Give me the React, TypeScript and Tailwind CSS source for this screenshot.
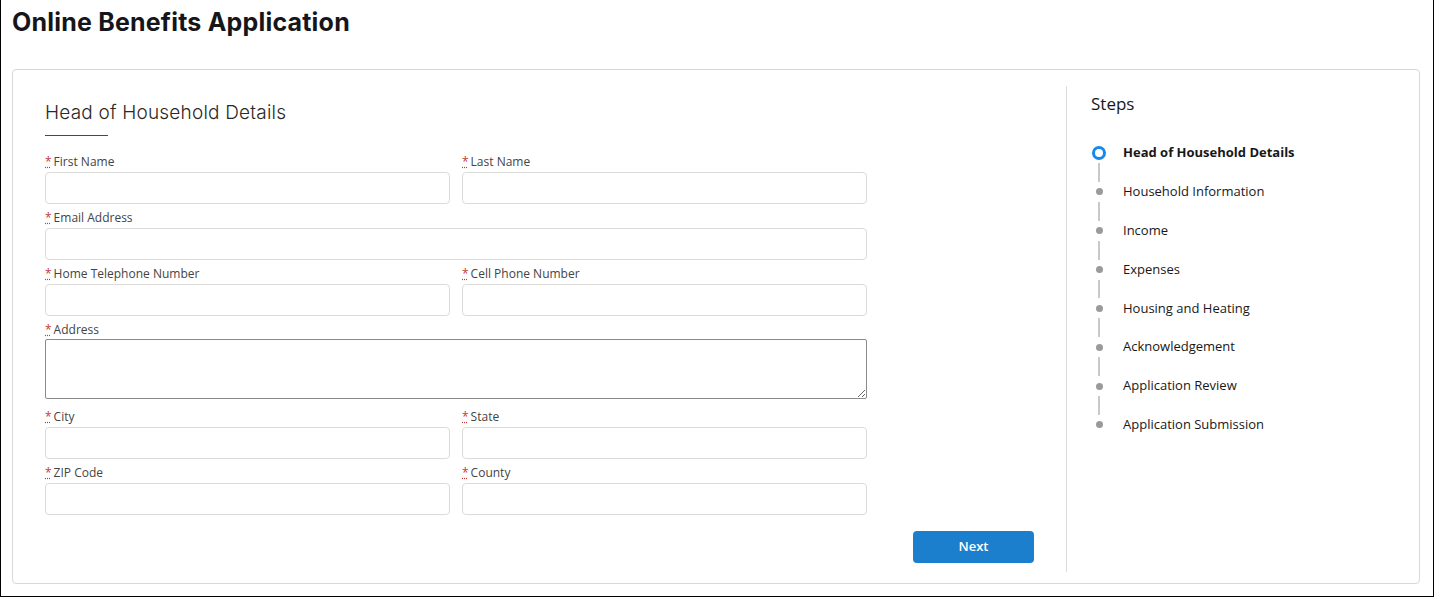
import React from 'react';

const steps = [
  'Head of Household Details',
  'Household Information',
  'Income',
  'Expenses',
  'Housing and Heating',
  'Acknowledgement',
  'Application Review',
  'Application Submission',
];

function Label({ text }: { text: string }) {
  return (
    <label className="block h-4 leading-4 mb-[2px] text-[12px] text-[#444]" style={{ fontFamily: '"Open Sans", sans-serif' }}>
      <abbr title="required" className="text-[#c23934] mr-[2px]">*</abbr>
      {text}
    </label>
  );
}

function Field({ label }: { label: string }) {
  return (
    <div className="flex flex-col">
      <Label text={label} />
      <input type="text" className="h-8 w-full rounded-[4px] border border-[#dddbda] bg-white px-3 outline-none" />
    </div>
  );
}

export default function App() {
  return (
    <div className="w-[1434px] h-[597px] bg-white border-x border-b border-black overflow-hidden" style={{ fontFamily: '"Open Sans", sans-serif' }}>
      {/* Page title */}
      <h1 className="pl-[11px] pt-[6px] text-[25px] leading-8 font-bold tracking-[0.2px] text-[#16161a]" style={{ fontFamily: 'Inter, sans-serif' }}>
        Online Benefits Application
      </h1>

      {/* Card */}
      <div className="ml-[11px] mr-[13px] mt-[31px] h-[515px] rounded-[4px] border border-[#d8d8d8] flex pt-4 pb-[11px]">
        {/* Form column */}
        <div className="flex-1 flex flex-col pl-8 pr-8 pt-[13px]">
          <h2 className="text-[19px] leading-7 font-light text-[#2b2826] tracking-[0.2px]" style={{ fontFamily: 'Inter, sans-serif' }}>
            Head of Household Details
          </h2>
          <div className="w-[63px] h-px bg-[#1b5297] mt-[8px]" />

          <div className="w-[822px] mt-[18px] flex flex-col gap-[6px]">
            <div className="grid grid-cols-2 gap-x-3">
              <Field label="First Name" />
              <Field label="Last Name" />
            </div>
            <Field label="Email Address" />
            <div className="grid grid-cols-2 gap-x-3">
              <Field label="Home Telephone Number" />
              <Field label="Cell Phone Number" />
            </div>
            <div className="flex flex-col mb-[4px]">
              <Label text="Address" />
              <textarea className="-mt-px h-[60px] w-full rounded-[2px] border border-[#8a8a8a] bg-white outline-none" />
            </div>
            <div className="grid grid-cols-2 gap-x-3">
              <Field label="City" />
              <Field label="State" />
            </div>
            <div className="grid grid-cols-2 gap-x-3">
              <Field label="ZIP Code" />
              <Field label="County" />
            </div>
          </div>

          <div className="flex justify-end mt-4">
            <button className="h-8 w-[121px] rounded-[4px] bg-[#1b7fce] text-white text-[13px] font-semibold">
              Next
            </button>
          </div>
        </div>

        {/* Steps column */}
        <div className="w-[353px] border-l border-[#dddbda] pl-6 pt-[6px]">
          <h3 className="text-[17px] leading-6 text-[#181818]">Steps</h3>
          <ul className="mt-[29px]">
            {steps.map((s, i) => (
              <li key={s}>
                <div className="flex items-center h-4">
                  <div className="w-4 flex justify-center">
                    {i === 0 ? (
                      <span className="block w-[14px] h-[14px] rounded-full border-[3px] border-[#1589ee] bg-white" />
                    ) : (
                      <span className="block w-[7px] h-[7px] rounded-full bg-[#9a9a9a]" />
                    )}
                  </div>
                  <span className={`ml-4 text-[13px] text-[#181818] ${i === 0 ? 'font-bold' : ''}`}>{s}</span>
                </div>
                {i < steps.length - 1 && (
                  <div className="w-4 h-[22.85px] flex justify-center py-[2px]">
                    <span className="block w-[2px] h-full bg-[#c9c9c9]" />
                  </div>
                )}
              </li>
            ))}
          </ul>
        </div>
      </div>
    </div>
  );
}
